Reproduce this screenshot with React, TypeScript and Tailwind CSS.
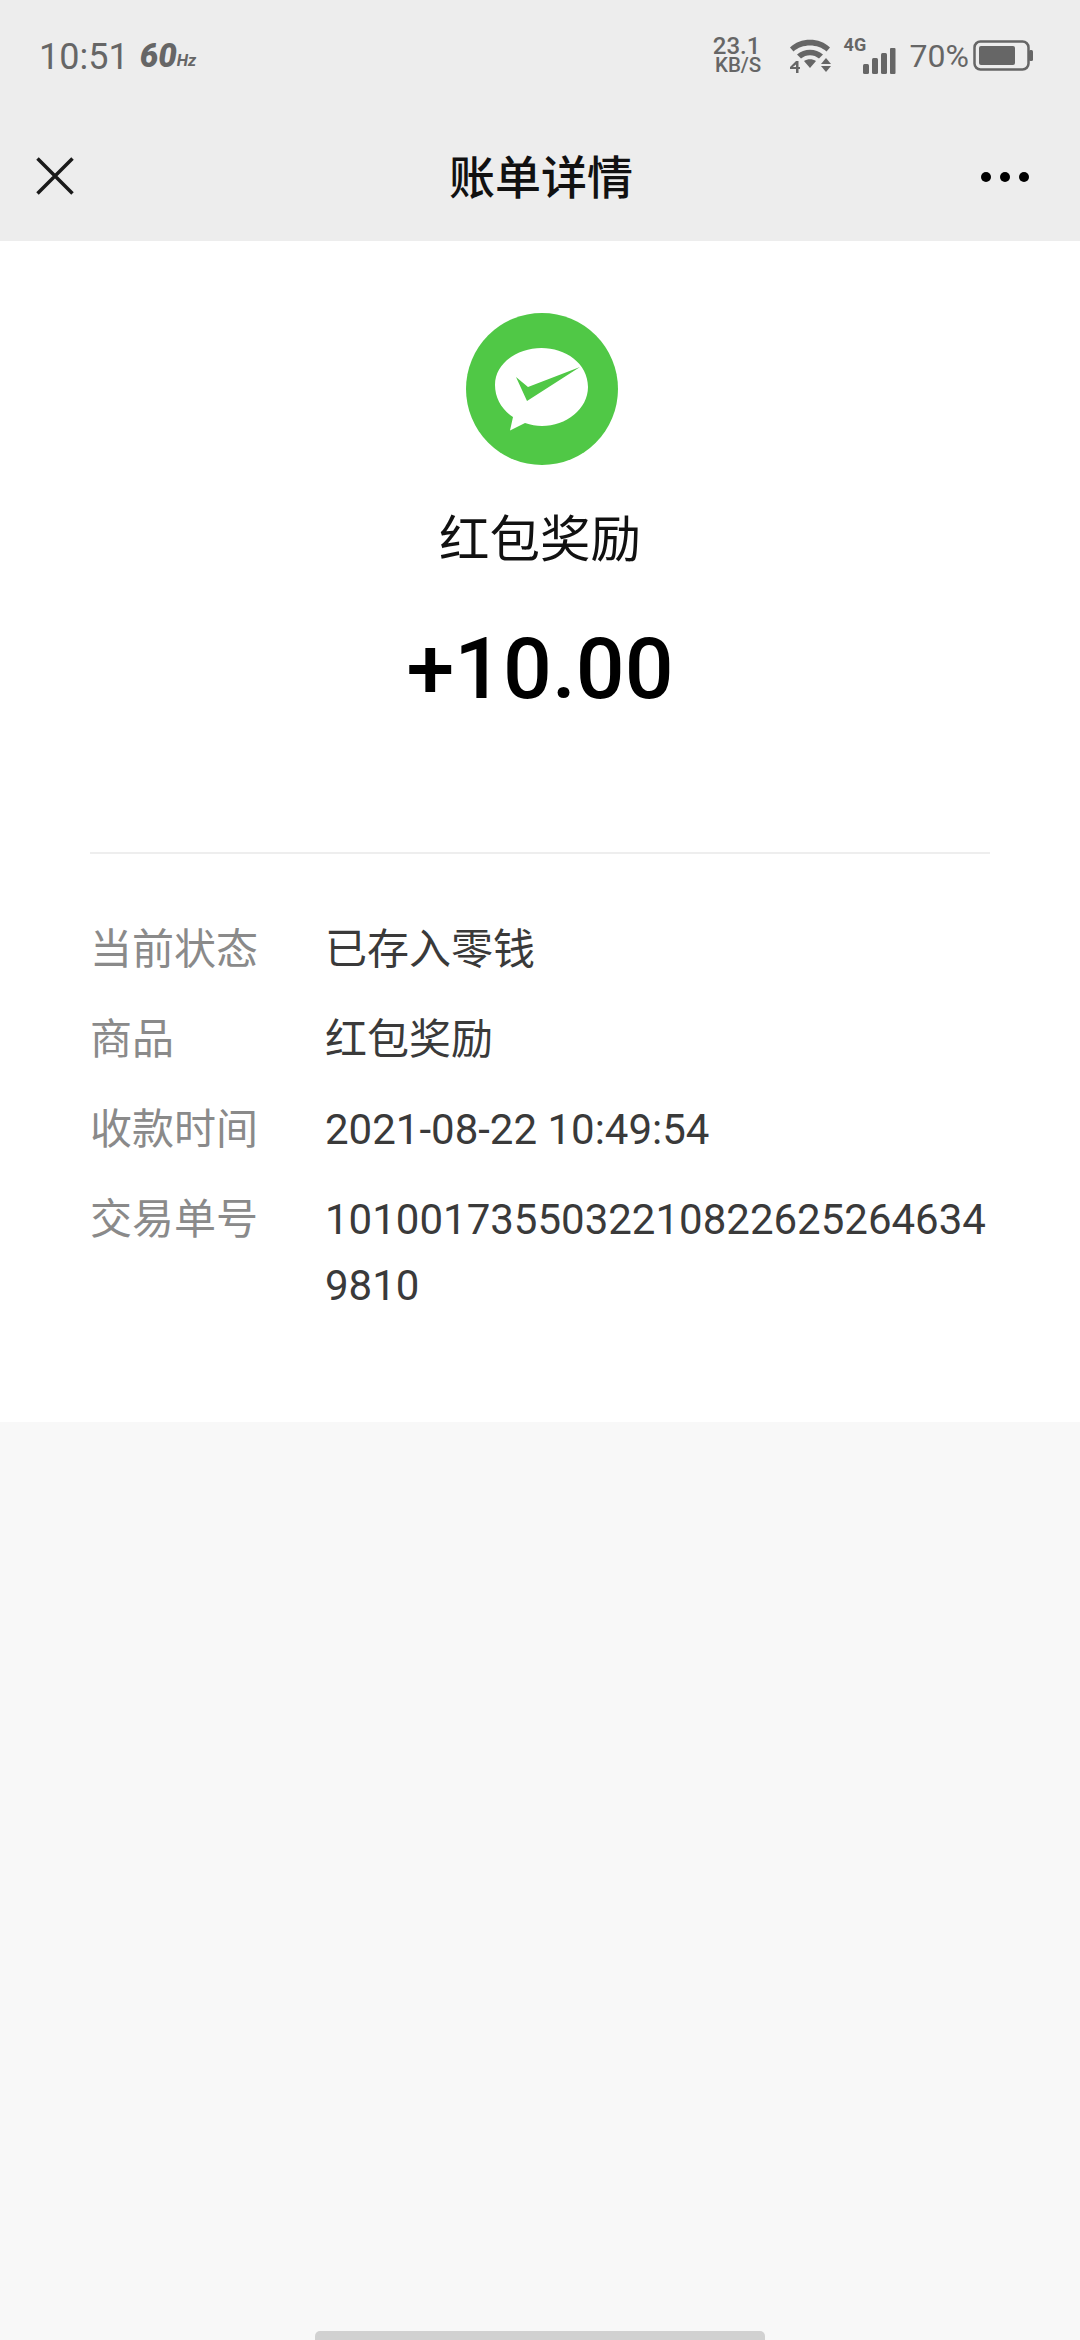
const cjk = "font-['Roboto','Noto_Sans_CJK_SC',sans-serif]";

function Row({ label, children }: { label: string; children: React.ReactNode }) {
  return (
    <div className="flex">
      <div className="w-[235px] shrink-0 text-[42px] leading-[66px] text-[#8a8a8a]">{label}</div>
      <div className="w-[665px] break-all text-[42px] leading-[66px] text-[#3a3a3a]">{children}</div>
    </div>
  );
}

function Logo() {
  return (
    <svg width="152" height="152" viewBox="0 0 152 152" className="block">
      <circle cx="76" cy="76" r="76" fill="#50c846" />
      <path d="M29 72C29 50 52 35 75.500 35C99 35 122 50 122 74C122 96 100 113 76 113C70 113 65 112 59 110L44 117.500L47 104C36 97 29 85 29 72Z" fill="#ffffff" />
      <path d="M50 64L62 74L114 54L61 88Z" fill="#50c846" />
    </svg>
  );
}

function StatusIcons() {
  return (
    <div className="flex items-center">
      <div className="mr-[27px] mt-[-1px] flex w-[50px] flex-col items-center font-['Roboto',sans-serif] font-medium text-[#666666]">
        <span className="text-[24px] leading-[20px]">23.1</span>
        <span className="ml-[3px] text-[20.500px] leading-[19px]">KB/S</span>
      </div>
      <svg width="42" height="36" viewBox="0 0 42 36" className="mr-[13px] mt-[-1px] block" fill="#666666">
        <path d="M1 9.500C11 -1 31 -1 41 9.500L37.500 13.500C29 5.500 13 5.500 4.500 13.500Z" />
        <path d="M8 16.500C15 10 27 10 34 16.500L30 20.500C25 16 17 16 12 20.500Z" />
        <path d="M15 23C18.500 20.500 23.500 20.500 27 23L21 30Z" />
        <path d="M38 20L43 26H33Z" transform="translate(-1 0)" />
        <path d="M33 28H43L38 34Z" transform="translate(-1 0)" />
        <path d="M7 23H9.500V29H11V31H9.500V35H7V31H1V29ZM7 26.500L3.800 29H7Z" />
      </svg>
      <div className="relative mr-[12px] h-[40px] w-[54px]">
        <span className="absolute left-0 top-[-1px] font-['Roboto',sans-serif] text-[18px] font-bold leading-[20px] text-[#666666]">4G</span>
        <svg width="34" height="28" viewBox="0 0 34 28" className="absolute bottom-[1px] right-[2px] block" fill="#666666">
          <rect x="1" y="17" width="6" height="10" rx="1.500" />
          <rect x="10" y="11" width="6" height="16" rx="1.500" />
          <rect x="19" y="6" width="6" height="21" rx="1.500" />
          <rect x="28" y="1" width="5.500" height="26" rx="1" />
        </svg>
      </div>
      <span className="mr-[4px] font-['Roboto',sans-serif] text-[32px] leading-[40px] text-[#666666]">70%</span>
      <svg width="60" height="32" viewBox="0 0 60 32" className="block" fill="none">
        <rect x="1.500" y="1.500" width="54" height="28" rx="6" stroke="#666666" strokeWidth="2.500" />
        <rect x="6" y="6" width="36" height="19" rx="2" fill="#666666" />
        <rect x="56" y="10" width="4" height="11" rx="1.500" fill="#666666" />
      </svg>
    </div>
  );
}

export default function App() {
  return (
    <div className={`flex h-[2340px] w-[1080px] flex-col overflow-hidden bg-[#f8f8f8] ${cjk}`}>
      <div className="flex h-[241px] flex-col bg-[#ededed]">
        <div className="flex h-[112px] items-center justify-between pl-[39px] pr-[47px]">
          <div className="flex items-center">
            <span className="mt-[2px] font-['Roboto',sans-serif] text-[36px] text-[#666666]">10:51</span>
            <span className="ml-[11px] font-['Roboto',sans-serif] text-[33px] font-black italic text-[#666666]">60</span>
            <span className="mt-[10px] font-['Roboto',sans-serif] text-[16.500px] font-bold italic text-[#666666]">Hz</span>
          </div>
          <StatusIcons />
        </div>
        <div className="flex h-[129px] items-start justify-between pl-[36px] pr-[51px]">
          <div className="w-[117px]">
            <svg width="38" height="38" viewBox="0 0 38 38" className="mt-[45px] block" fill="none">
              <path d="M1.500 1.500L36.500 36.500M36.500 1.500L1.500 36.500" stroke="#1a1a1a" strokeWidth="3.500" />
            </svg>
          </div>
          <span className="mt-[33px] text-[46px] leading-[66px] font-medium text-[#111111]">账单详情</span>
          <div className="mt-[60px] flex w-[100px] justify-end gap-[9px]">
            <span className="h-[10px] w-[10px] rounded-full bg-black" />
            <span className="h-[10px] w-[10px] rounded-full bg-black" />
            <span className="h-[10px] w-[10px] rounded-full bg-black" />
          </div>
        </div>
      </div>

      <div className="flex h-[1181px] flex-col items-center bg-white px-[90px]">
        <div className="ml-[4px] mt-[72px]">
          <Logo />
        </div>
        <div className="mt-[45px] text-[50.500px] leading-[60px] text-[#111111]">红包奖励</div>
        <div className="mt-[49px] font-['Roboto',sans-serif] text-[86px] leading-[100px] font-medium text-black">+10.00</div>
        <div className="mt-[133px] h-[2px] w-full bg-[#eeeeee]" />
        <div className="mt-[63px] flex w-full flex-col gap-[24px]">
          <Row label="当前状态">已存入零钱</Row>
          <Row label="商品">红包奖励</Row>
          <Row label="收款时间">2021-08-22 10:49:54</Row>
          <Row label="交易单号">10100173550322108226252646349810</Row>
        </div>
      </div>

      <div className="flex flex-1 items-end justify-center">
        <div className="h-[9px] w-[450px] rounded-t-[5px] bg-[#d1d1d1]" />
      </div>
    </div>
  );
}
